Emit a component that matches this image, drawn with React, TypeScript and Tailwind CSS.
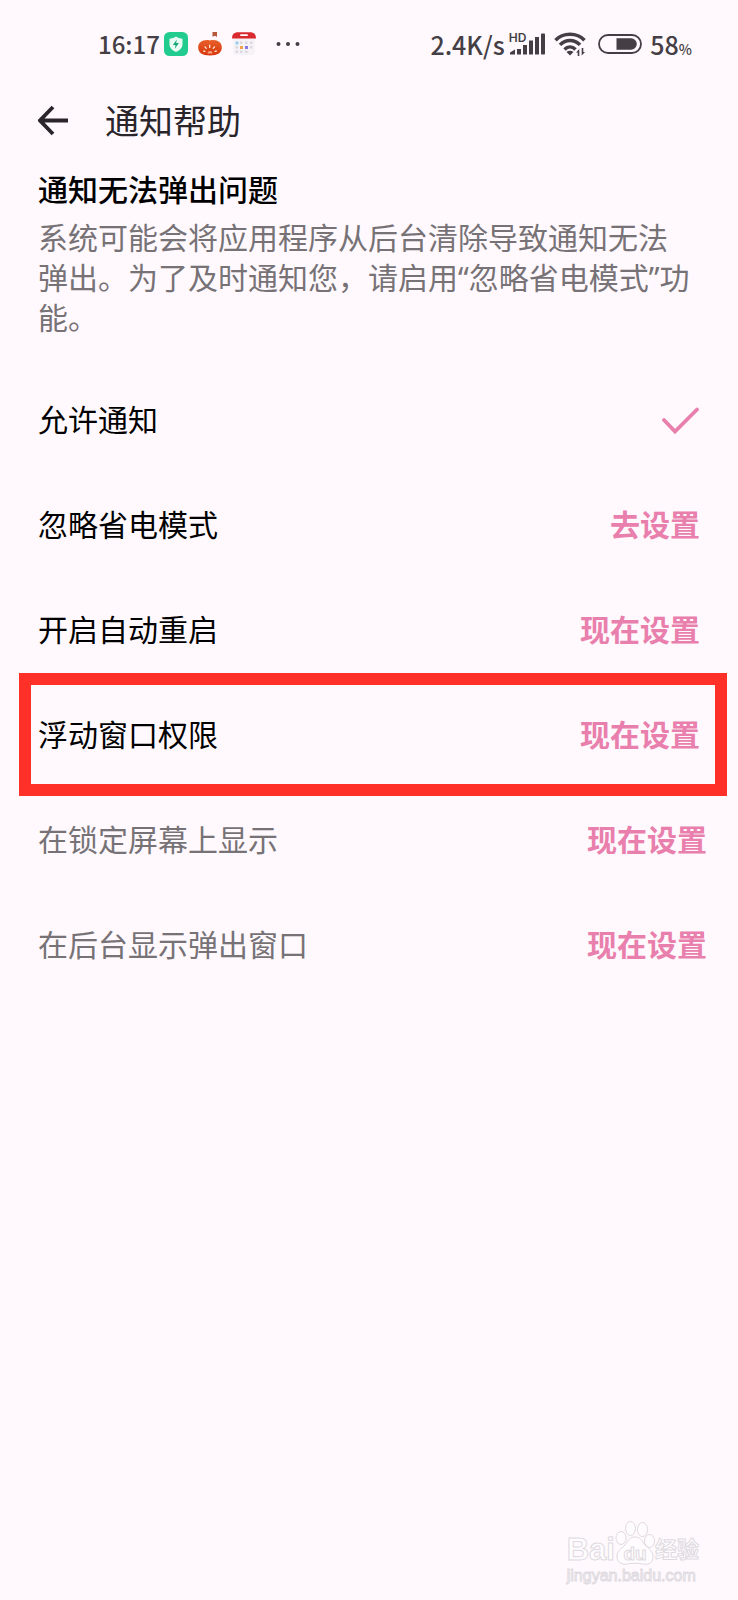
import React from 'react';

type Setting = {
  label: string;
  action?: string;
  muted?: boolean;
  highlighted?: boolean;
};

const settings: Setting[] = [
  { label: '允许通知' },
  { label: '忽略省电模式', action: '去设置' },
  { label: '开启自动重启', action: '现在设置' },
  { label: '浮动窗口权限', action: '现在设置', highlighted: true },
  { label: '在锁定屏幕上显示', action: '现在设置', muted: true },
  { label: '在后台显示弹出窗口', action: '现在设置', muted: true },
];

const ShieldIcon = () => (
  <svg className="h-6 w-6" viewBox="0 0 24 24" aria-hidden="true">
    <rect x="0" y="0" width="24" height="24" rx="5.5" fill="#22cc8f" />
    <path d="M12 4.500c2.200 1.400 4.200 2 6.500 2.200v5.600c0 3.600-2.400 6-6.500 7.600-4.100-1.600-6.500-4-6.500-7.600V6.700C7.800 6.500 9.800 5.900 12 4.500z" fill="#e9fbf4" />
    <path d="M12.800 7.500 8.900 12.900h2.600l-.7 3.800 4.100-5.600h-2.700z" fill="#1aa877" />
  </svg>
);

const PumpkinIcon = () => (
  <svg className="h-6 w-6" viewBox="0 0 24 24" aria-hidden="true">
    <defs>
      <linearGradient id="pumpkin" x1="0" y1="0" x2="0" y2="1">
        <stop offset="0" stopColor="#e8602a" />
        <stop offset="1" stopColor="#d8350d" />
      </linearGradient>
    </defs>
    <path d="M14.500 0h4.500v5l-2-1.200-2.500.9z" fill="#b5573c" />
    <path d="M12 8.500c6.500-1.500 11.800 1.500 11.800 7 0 5-3.800 8-11.800 8S.2 20.500.2 15.500c0-5.500 5.300-8.500 11.800-7z" fill="url(#pumpkin)" />
    <g stroke="#fff3df" strokeWidth="1.200" strokeLinecap="round">
      <path d="M5.500 19l1.500.3M7 14.800l1.300 1.500M11.700 13v2.500M16.500 14.800l-1.300 1.500M18.500 19l-1.500.3" />
    </g>
    <path d="M9.500 21.500a2.500 2.500 0 0 1 5 0z" fill="#f8a27c" />
  </svg>
);

const CalendarIcon = () => (
  <svg className="h-6 w-6" viewBox="0 0 24 24" aria-hidden="true">
    <rect x="1" y="1" width="22" height="22" rx="3" fill="#f6f3f6" />
    <path d="M0 6.500C0 2.500 2 .3 6 .3h12c4 0 6 2.200 6 6.200z" fill="#d92a30" />
    <rect x="8" y="2.200" width="8" height="1.800" rx=".9" fill="#fff" />
    <g fill="#dcd8e2">
      <rect x="8" y="9.500" width="2.500" height="2.500" />
      <rect x="13" y="9.500" width="2.500" height="2.500" />
      <rect x="18" y="9.500" width="2.500" height="2.500" />
      <rect x="3.500" y="14" width="2.500" height="2.500" />
      <rect x="18" y="14" width="2.500" height="2.500" />
      <rect x="3.500" y="18.500" width="2.500" height="2.500" />
      <rect x="8" y="18.500" width="2.500" height="2.500" />
      <rect x="13" y="18.500" width="2.500" height="2.500" />
    </g>
    <rect x="3.500" y="9.500" width="3" height="3" fill="#9ccbee" />
    <rect x="8" y="14" width="3" height="3" fill="#f3a24b" />
    <rect x="13" y="14" width="3" height="3" fill="#8a78e0" />
  </svg>
);

const SignalIcon = () => (
  <div className="flex h-7 items-start">
    <span className="font-['Inter',sans-serif] text-xs leading-4 font-semibold">HD</span>
    <svg className="mt-[2px] -ml-4 h-6 w-9" viewBox="0 0 36 24" fill="#453f45" aria-hidden="true">
      <path d="M0 22.500v-2l5-3v5z" />
      <rect x="7" y="17" width="4" height="5.500" />
      <rect x="13" y="13" width="4" height="9.500" />
      <rect x="19" y="8.500" width="4" height="14" />
      <rect x="25" y="5" width="4" height="17.500" />
      <rect x="31" y="1.500" width="4" height="21" rx=".8" />
    </svg>
  </div>
);

const WifiIcon = () => (
  <svg className="h-6 w-8" viewBox="0 0 32 24" aria-hidden="true">
    <g fill="none" stroke="#453f45" strokeWidth="3.500">
      <path d="M1.500 8.200C9 .2 23 .2 30.500 8.200" />
      <path d="M6 12.900c5.600-5.800 14.400-5.800 20 0" />
      <path d="M10.500 17.400c3.200-3.200 7.800-3.200 11 0" />
    </g>
    <path d="M12.500 20c2.200-1.700 4.800-1.700 7 0L16 23.500z" fill="#453f45" />
    <path d="M22 20.500l3.300-3.500v7h-1.600v-3.500zM31 20l-3.300 3.500V16h1.600v4z" fill="#453f45" />
  </svg>
);

const BatteryIcon = () => (
  <svg className="h-5 w-11" viewBox="0 0 44 20" aria-hidden="true">
    <rect x="1" y="1" width="42" height="18" rx="9" fill="none" stroke="#453f45" strokeWidth="1.800" />
    <path d="M18.500 4.200h14.500a5.800 5.800 0 0 1 0 11.600H18.500z" fill="#453f45" />
  </svg>
);

const StatusBar = () => (
  <div className="flex h-[88px] items-center justify-between pr-[46px] pl-[98px] text-[25px] font-medium text-[#453f45]">
    <div className="flex items-center">
      <span className="text-2xl leading-10">16:17</span>
      <div className="ml-1 flex items-center gap-[10px]">
        <ShieldIcon />
        <PumpkinIcon />
        <CalendarIcon />
      </div>
      <svg className="ml-5 h-6 w-6" viewBox="0 0 24 24" fill="#453f45" aria-hidden="true">
        <circle cx="2.500" cy="12" r="2" />
        <circle cx="12" cy="12" r="2" />
        <circle cx="21.500" cy="12" r="2" />
      </svg>
    </div>
    <div className="flex items-center">
      <span>2.4K/s</span>
      <div className="ml-1 flex items-center gap-2">
        <SignalIcon />
        <WifiIcon />
      </div>
      <div className="ml-3 flex items-center gap-2">
        <BatteryIcon />
        <span>
          58<span className="text-sm">%</span>
        </span>
      </div>
    </div>
  </div>
);

const SettingRow: React.FC<{ item: Setting }> = ({ item }) => (
  <li
    className={`relative flex h-[105px] items-center justify-between pb-[2px] pl-[38px] ${
      item.muted ? 'pr-[31px] text-[#777276]' : 'pr-[38px] text-black'
    }`}
  >
    <span>{item.label}</span>
    {item.action ? (
      <button type="button" className="font-bold text-[#e97fac]">
        {item.action}
      </button>
    ) : (
      <svg className="mt-1 h-7 w-10" viewBox="0 0 40 28" role="img" aria-label="已允许">
        <path d="M4 14 15 25.500 37 3.500" fill="none" stroke="#e97fac" strokeWidth="3.800" strokeLinecap="round" />
      </svg>
    )}
    {/* Marco rojo de la fila destacada */}
    {item.highlighted && (
      <div className="pointer-events-none absolute -top-2 right-[11px] -bottom-[10px] left-[19px] border-12 border-[#ff3027]" />
    )}
  </li>
);

const PawIcon = () => (
  <svg className="h-12 w-10" viewBox="0 0 40 48" fill="#fffcff" stroke="#dedade" aria-hidden="true">
    <ellipse cx="6" cy="20" rx="5" ry="6.500" />
    <ellipse cx="15.500" cy="10.500" rx="5" ry="7" />
    <ellipse cx="27.500" cy="11.500" rx="5" ry="7" />
    <ellipse cx="34.500" cy="23" rx="5" ry="6.500" />
    <path d="M20 19c5 0 7 4 10 8 4 4 9 7 8 13-1 6-6 7-10 6-5-1-11-1-16 0-4 1-9-1-10-6-1-6 4-9 8-13 3-4 5-8 10-8z" />
  </svg>
);

const Watermark = () => (
  <div className="font-['Liberation_Sans','Noto_Sans_CJK_SC',sans-serif] font-bold text-[#fffcff] [-webkit-text-stroke:1px_#dedade]">
    <div className="flex items-end">
      <span className="text-[31px] leading-8">Bai</span>
      <div className="relative">
        <PawIcon />
        <span className="absolute inset-x-0 bottom-0 text-center text-[19px] leading-6">du</span>
      </div>
      <span className="text-[22px] leading-8">经验</span>
    </div>
    <div className="text-base leading-5 font-normal">jingyan.baidu.com</div>
  </div>
);

const App: React.FC = () => {
  return (
    <div
      lang="zh-CN"
      className="flex min-h-screen flex-col bg-[#fff9fe] font-['Noto_Sans_CJK_SC',sans-serif] text-[30px] leading-10"
    >
      <StatusBar />

      <header className="flex h-16 items-center pl-[38px]">
        <button type="button" aria-label="返回">
          <svg className="h-8 w-8" viewBox="0 0 32 32" fill="none" stroke="#29252b" strokeWidth="3.800" aria-hidden="true">
            <path d="M30 16.500H3M15 3 2 16.500l13 13.500" />
          </svg>
        </button>
        <h1 className="ml-[35px] text-[34px] text-[#29252b]">通知帮助</h1>
      </header>

      <main>
        <section className="pt-4 pr-[42px] pl-[38px]">
          <h2 className="font-medium text-black">通知无法弹出问题</h2>
          <p className="mt-[10px] font-['Noto_Sans','Noto_Sans_CJK_SC',sans-serif] text-[#777276]">
            系统可能会将应用程序从后台清除导致通知无法弹出。为了及时通知您，请启用“忽略省电模式”功能。
          </p>
        </section>

        <ul className="mt-7">
          {settings.map(item => (
            <SettingRow key={item.label} item={item} />
          ))}
        </ul>
      </main>

      <footer className="mt-auto mr-[39px] mb-[14px] self-end">
        <Watermark />
      </footer>
    </div>
  );
};

export default App;
